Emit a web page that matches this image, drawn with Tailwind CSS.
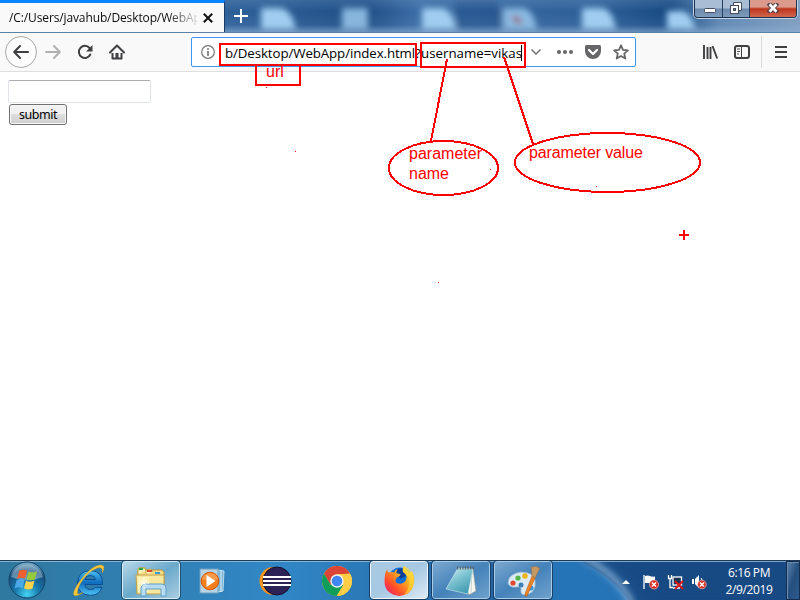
<!DOCTYPE html>
<html lang="en">
<head>
<meta charset="utf-8">
<title>WebApp</title>
<script src="https://cdn.jsdelivr.net/npm/@tailwindcss/browser@4"></script>
</head>
<body class="w-[800px] h-[600px] overflow-hidden bg-white font-['Open_Sans','Noto_Sans',sans-serif]">
<div class="relative flex flex-col w-[800px] h-[600px]">

  <!-- Title bar -->
  <header class="relative flex h-[33px] shrink-0 overflow-hidden bg-[#2f6096] border-b border-[#5c81a8]">
    <svg class="absolute inset-0" width="800" height="33" viewBox="0 0 800 33">
      <defs>
        <linearGradient id="sky" x1="0" x2="1"><stop offset="0" stop-color="#386aa4"/><stop offset=".3" stop-color="#2d5f97"/><stop offset=".46" stop-color="#1f4e86"/><stop offset=".52" stop-color="#3b6ca5"/><stop offset=".75" stop-color="#2d5f97"/><stop offset=".84" stop-color="#164881"/><stop offset=".9" stop-color="#6188b3"/><stop offset="1" stop-color="#829fc0"/></linearGradient>
        <linearGradient id="haze" x1="0" x2="0" y1="0" y2="1"><stop offset="0" stop-color="#8fb3d8" stop-opacity=".2"/><stop offset=".35" stop-color="#8fb3d8" stop-opacity="0"/><stop offset=".75" stop-color="#8fb3d8" stop-opacity=".1"/><stop offset="1" stop-color="#8fb0d3" stop-opacity=".7"/></linearGradient>
        <filter id="soft" x="-50%" y="-50%" width="200%" height="200%"><feGaussianBlur stdDeviation="3"/></filter>
      </defs>
      <rect width="800" height="33" fill="url(#sky)"/>
      <g filter="url(#soft)">
        <path d="M455 0h40l20 33h-60z" fill="#194780" opacity=".45"/>
        <g fill="#a0cff2">
          <path d="M261 8h20q11 2 15 22h-35z"/>
          <path d="M342 8h26v22h-26z" opacity=".8"/>
          <path d="M422 8h20q11 2 14 22h-34z"/>
          <path d="M503 8h20q11 2 14 22h-34z" opacity=".8"/>
          <path d="M582 8h20q11 2 14 22h-34z"/>
          <path d="M667 11h16q8 2 13 19h-29z"/>
        </g>
        <path d="M513 17l8 6" stroke="#a04b68" stroke-width="5"/>
      </g>
      <rect width="800" height="33" fill="url(#haze)"/>
    </svg>
    <div class="relative flex items-center w-[225px] h-[33px] pl-[9px] bg-[#f9f9f9] border-t-[3px] border-t-[#0a84ff] border-r border-r-[#173a66]">
      <span class="w-[188px] overflow-hidden whitespace-nowrap text-[12px] leading-[16px] tracking-[-0.12px] text-[#0c0c0d] [mask-image:linear-gradient(to_right,#000_158px,transparent_192px)]">/C:/Users/javahub/Desktop/WebApp</span>
      <svg class="ml-[6px]" width="10" height="10" viewBox="0 0 10 10"><path d="M.8.8l8.400 8.400M9.200.8L.8 9.200" stroke="#111" stroke-width="2"/></svg>
    </div>
    <svg class="relative ml-[9px] mt-[9px]" width="14" height="14" viewBox="0 0 14 14"><path d="M7 0v14M0 7h14" stroke="#fff" stroke-width="2"/></svg>
    <div class="absolute left-[694px] top-0 flex w-[103px] h-[18px] border border-t-0 border-[#1b3350] rounded-b-[4px] overflow-hidden shadow-[0_0_0_1px_#c2d2e4]">
      <div class="w-[28px] flex justify-center items-start border-r border-[#24415f] bg-linear-to-b from-[#a9bed5] from-45% via-[#6d8bae] via-55% to-[#7f9bbb]">
        <svg class="mt-[8px] ml-[3px]" width="12" height="6" viewBox="0 0 12 6"><rect x=".5" y=".5" width="11" height="4" rx="1" fill="#fff" stroke="#454c60"/></svg>
      </div>
      <div class="w-[27px] flex justify-center items-start border-r border-[#24415f] bg-linear-to-b from-[#a9bed5] from-45% via-[#6d8bae] via-55% to-[#7f9bbb]">
        <svg class="mt-[2px] -ml-px" width="12" height="12" viewBox="0 0 12 12"><path d="M3.500.5h8v8h-8z" fill="#fff" stroke="#454c60"/><rect x=".5" y="3.500" width="8" height="8" fill="#fff" stroke="#454c60"/><rect x="3.500" y="6.500" width="2" height="2" fill="#6b89ab" stroke="#454c60"/></svg>
      </div>
      <div class="flex-1 flex justify-center items-start bg-linear-to-b from-[#dc9a8c] from-40% via-[#bd3419] via-52% to-[#d2654d]">
        <svg class="mt-[3px]" width="12" height="10" viewBox="0 0 12 10"><path d="M3 1.800l6 6.400M9 1.800l-6 6.400" stroke="#513c49" stroke-width="4.600" stroke-linecap="square"/><path d="M2.500 1.300l7 7.400M9.500 1.300l-7 7.400" stroke="#fff" stroke-width="2.700"/></svg>
      </div>
    </div>
  </header>

  <!-- Navigation toolbar -->
  <nav class="flex items-center h-[39px] shrink-0 bg-[#f9f9f9] border-b border-[#dedee0]">
    <div class="flex items-center justify-center ml-[5px] w-[32px] h-[32px] rounded-full border border-[#a9a9aa] bg-[#fcfcfc]">
      <svg width="16" height="16" viewBox="0 0 16 16" fill="none" stroke="#3f3f42" stroke-width="2" stroke-linecap="round" stroke-linejoin="round"><path d="M15 8H1.500M7 2L1.200 8 7 14"/></svg>
    </div>
    <svg class="ml-[8px]" width="16" height="16" viewBox="0 0 16 16" fill="none" stroke="#b0b0b1" stroke-width="2" stroke-linecap="round" stroke-linejoin="round"><path d="M1 8h13.500M9 2l5.800 6L9 14"/></svg>
    <svg class="ml-[16px]" width="16" height="16" viewBox="0 0 16 16"><path d="M13.300 10.500A6 6 0 1 1 12.500 4" fill="none" stroke="#3f3f42" stroke-width="2" stroke-linecap="round"/><path d="M15.500 1v6.500H9z" fill="#3f3f42"/></svg>
    <svg class="ml-[16px]" width="16" height="16" viewBox="0 0 16 16"><path d="M1 8.500L8 1.500l7 7" fill="none" stroke="#3f3f42" stroke-width="2" stroke-linecap="round" stroke-linejoin="round"/><path d="M3.500 9v5.500h9V9" fill="none" stroke="#3f3f42" stroke-width="2" stroke-linejoin="round"/><path d="M6.500 9h3v5h-3z" fill="#3f3f42"/></svg>

    <div class="flex items-center ml-[66px] w-[445px] h-[30px] bg-white border border-[#3d96f2] rounded-[2px]">
      <svg class="ml-[9px]" width="14" height="14" viewBox="0 0 14 14"><circle cx="7" cy="7" r="6.300" fill="none" stroke="#747476" stroke-width="1.200"/><path d="M7 3v1.800M7 6v5" stroke="#747476" stroke-width="1.600"/></svg>
      <div class="flex w-[301px] ml-[10px] pt-[2px] text-[13.300px] leading-[20px] text-black whitespace-nowrap">
        <span class="w-[196px] tracking-[-0.1px]">b/Desktop/WebApp/index.html?</span><span>username=vikas</span>
      </div>
      <svg class="ml-[4px]" width="12" height="8" viewBox="0 0 12 8"><path d="M1.500 1.500L6 6l4.500-4.500" fill="none" stroke="#707072" stroke-width="1.500"/></svg>
      <svg class="ml-[14px]" width="18" height="4" viewBox="0 0 18 4" fill="#666668"><circle cx="3" cy="2" r="2"/><circle cx="9" cy="2" r="2"/><circle cx="15" cy="2" r="2"/></svg>
      <svg class="ml-[11px]" width="16" height="15" viewBox="0 0 16 15"><path d="M1.500 0h13Q16 0 16 1.500V6a8 8 0 0 1-16 0V1.500Q0 0 1.500 0z" fill="#666668"/><path d="M4 5l4 4 4-4" fill="none" stroke="#fff" stroke-width="2.200" stroke-linecap="round" stroke-linejoin="round"/></svg>
      <svg class="ml-[12px]" width="16" height="16" viewBox="0 0 16 16"><path d="M8 1.300l2 4.500 4.900.5-3.700 3.300 1.100 4.900L8 12l-4.300 2.500 1.100-4.900L1.100 6.300 6 5.800z" fill="none" stroke="#666668" stroke-width="1.800" stroke-linejoin="round"/></svg>
    </div>

    <svg class="ml-[66px]" width="17" height="14" viewBox="0 0 17 14" stroke="#3f3f42"><path d="M2 0v14M5.500 2v12M8.500 2v12M10.500 1l4.700 12.500" stroke-width="1.900"/></svg>
    <svg class="ml-[15px]" width="16" height="14" viewBox="0 0 16 14" fill="none" stroke="#3f3f42"><rect x="1" y="1" width="14" height="12" rx="2.200" stroke-width="2"/><path d="M7.500 1v12" stroke-width="1"/><path d="M3 4h3M3 6.500h3M3 9h2" stroke-width=".9"/></svg>
    <div class="ml-[11px] w-px h-[32px] bg-[#dcdcdd]"></div>
    <svg class="ml-[13px]" width="12" height="12" viewBox="0 0 12 12"><path d="M0 1h12M0 6h12M0 11h12" stroke="#3f3f42" stroke-width="2"/></svg>
  </nav>

  <!-- Page -->
  <main class="flex-1 pl-[8px] pt-[8px] bg-white">
    <input type="text" class="block w-[143px] h-[23px] bg-white border border-[#e0e3ea] border-t-[#abadb3] rounded-[2px]">
    <button class="flex items-center justify-center mt-px ml-[1px] w-[58px] h-[21px] pt-[2px] rounded-[3px] border border-[#707070] bg-linear-to-b from-[#f1f1f1] from-45% via-[#dddddd] via-50% to-[#cfcfcf] shadow-[inset_0_0_0_1px_#f8f8f8] text-[12.500px] tracking-[-0.45px] text-black leading-none font-['Noto_Sans',sans-serif]">submit</button>
  </main>

  <!-- Taskbar -->
  <footer class="relative flex h-[40px] shrink-0 overflow-hidden border-t border-[#1d3c57] bg-linear-to-r from-[#2f789f] via-[#3187c6] via-35% to-[#1a4a85] to-83%">
    <svg class="absolute inset-0" width="800" height="39" viewBox="0 0 800 39">
      <defs>
        <filter id="blur5" x="-50%" y="-50%" width="200%" height="200%"><feGaussianBlur stdDeviation="3"/></filter>
      </defs>
      <path d="M552 0h28q35 18 48 39h-76z" fill="#2674b8"/>
      <path d="M582-5q38 20 50 49" fill="none" stroke="#8db6d8" stroke-width="7" opacity=".75" filter="url(#blur5)"/>
      <path d="M600-2h200v41H642q-10-24-42-41z" fill="#174a83" opacity=".6" filter="url(#blur5)"/>
      <path d="M0 .5h800" stroke="#a4c6de" opacity=".75"/>
    </svg>

    <div class="relative flex w-[122px] h-[39px]">
      <svg class="ml-[8px]" width="38" height="38" viewBox="0 0 38 38">
        <defs><radialGradient id="orb" cx=".5" cy=".9" r=".85"><stop offset="0" stop-color="#45d4f5"/><stop offset=".4" stop-color="#1879ad"/><stop offset=".8" stop-color="#174b78"/><stop offset="1" stop-color="#6fa5c5"/></radialGradient></defs>
        <circle cx="19" cy="19" r="18" fill="url(#orb)" stroke="#164364"/>
        <path d="M3 16A16.500 16.500 0 0 1 35 16Q19 23 3 16z" fill="#d8eaf5" opacity=".38"/>
        <path d="M11 10q4-2.500 8-.3l-2 8q-4-2-8 .3z" fill="#ee6030"/><path d="M20.500 10.500q4 2 8.500-.3l-2 8q-4.500 2-8.500-.3z" fill="#97c93d"/><path d="M8.500 19.500q4-2.300 8-.3l-2 8q-4-2-8 .3z" fill="#4ba9e9"/><path d="M18 19.800q4 2 8.500-.3l-2 8q-4.500 2-8.500-.3z" fill="#fdd14a"/>
      </svg>
      <svg class="ml-[26px] mt-[3px]" width="34" height="34" viewBox="0 0 34 34">
        <defs><linearGradient id="ie" x1="0" x2="0" y1="0" y2="1"><stop offset="0" stop-color="#4cc0f5"/><stop offset=".5" stop-color="#0f6cbd"/><stop offset="1" stop-color="#50c5f6"/></linearGradient></defs>
        <path fill-rule="evenodd" d="M30.500 20.500H13q.6 5 5.500 5 3.500 0 5-2.200h6.500Q27.500 31.300 18.500 31.300 6 31 5.500 19 6 7 18.500 6.500 31 7 30.500 20.500zM13 15.500h10.500q-.6-4-5.200-4T13 15.500z" fill="url(#ie)" stroke="#0c4e94" stroke-width="1"/>
        <path d="M6.500 19Q-1 31 3 31.600q3 .3 8-3.100Q1 34.500 8 20 15 8 25 4q6-2 5.500 4.500Q34 1 28.500 1 19 1.500 6.500 19z" fill="#fbc93b" stroke="#e7a41b" stroke-width=".5"/>
      </svg>
    </div>

    <div class="relative w-[58px] h-[38px] rounded-[3px] border border-[#d4ebf7] outline outline-[#1f516f] bg-linear-to-br from-[#b7d8e9] via-[#6aa9cb] to-[#a9cde1] flex justify-center">
      <svg class="mt-[4px]" width="34" height="31" viewBox="0 0 34 31">
        <path d="M4 27V4l1-2h6l1 2h16l2 2v21z" fill="#f3dc84" stroke="#b59640"/>
        <path d="M4 8V4l1-2h6l1 3M12 8V4l5-1 2 3" fill="#fff3b7" stroke="#c2a64b"/>
        <path d="M2 9h28v19H3z" fill="#f8e79f" stroke="#c0a14a"/><path d="M4 11h11v15H4z" fill="#fff5c6" opacity=".7"/>
        <path d="M5 3h4" stroke="#28a745" stroke-width="2"/><path d="M13 5h5" stroke="#d64a32" stroke-width="2"/><path d="M21 7h5" stroke="#359ad5" stroke-width="2"/>
        <path d="M7 30v-8q0-4 4-4h17q4 0 4 4v8h-5v-7H12v7z" fill="#b8ddf0" stroke="#5f9fc7"/>
        <path d="M10 11v12M5 17h10M7 14l6 6M13 14l-6 6" stroke="#fff" stroke-width=".7"/>
      </svg>
    </div>

    <div class="relative flex w-[190px] h-[39px] items-center">
      <svg class="ml-[19px]" width="30" height="26" viewBox="0 0 30 26">
        <path d="M19 2l6 1-1 20-5 1z" fill="#79b4d7" stroke="#d4edf8" stroke-width=".8"/><path d="M22 2v22" stroke="#e5f4fb" stroke-width="1"/>
        <rect x="1" y="1" width="18" height="24" fill="#b7d4e6" stroke="#71a0bd"/>
        <circle cx="11" cy="13" r="8.800" fill="#f57e1c" stroke="#d8570a"/><path d="M3 11a8.500 8.500 0 0 1 16 0q-8 3-16 0z" fill="#ffb16a" opacity=".6"/><path d="M7.500 7v12l9-6z" fill="#fff"/>
      </svg>
      <svg class="ml-[30px]" width="33" height="30" viewBox="0 0 33 30">
        <circle cx="14.500" cy="15" r="14" fill="#f7941e"/><circle cx="18" cy="15" r="14" fill="#2c2255" stroke="#15102e"/><path d="M4 11h28M4 15h28M4 19h28" stroke="#fff" stroke-width="2"/>
      </svg>
      <svg class="ml-[30px]" width="30" height="30" viewBox="0 0 30 30">
        <circle cx="15" cy="15" r="15" fill="#ffcd46"/>
        <path d="M2 7.500A15 15 0 0 1 28 7.500L15 8.500 8.700 19z" fill="#db4437"/>
        <path d="M2 7.500A15 15 0 0 0 14.700 30L21.500 18.800 8.500 18.500z" fill="#0f9d58"/>
        <path d="M15 8.300h13.400A15 15 0 0 1 14.700 30l6.800-11.200z" fill="#ffcd46"/>
        <circle cx="15" cy="15" r="6.700" fill="#f1f1f1"/><circle cx="15" cy="15" r="5.300" fill="#4285f4"/>
      </svg>
    </div>

    <div class="relative flex gap-[4px]">
      <div class="w-[58px] h-[38px] rounded-[3px] border border-[#f0f7fc] outline outline-[#173f68] bg-linear-to-br from-[#aac9e2] via-[#a6c9e3] to-[#dce9f4] flex justify-center">
        <svg class="mt-[3px]" width="32" height="32" viewBox="0 0 32 32">
          <defs><linearGradient id="fox" x1="1" y1="0" x2="0" y2="1"><stop offset="0" stop-color="#fff04a"/><stop offset=".4" stop-color="#ffa81f"/><stop offset=".7" stop-color="#ff4a2c"/><stop offset="1" stop-color="#e8178a"/></linearGradient></defs>
          <circle cx="17" cy="14" r="11.500" fill="#0a6fd6"/><path d="M12 6q5-4 9-2l2 7-6 3z" fill="#083f9a"/>
          <path d="M4 4q0 2 2 3.500 3-1 5 0Q12 4.500 15 4q-2 2-1.500 4.200l4 .8q0 2-3.500 3.500-3 4 0 5.500 3 1.500 6 0 4-2 3.500-7Q22 8 20 7q-1-4 1.500-6Q23 5 27 8l2-2q3 6 2 12-2 12-15 13Q2 29 1.500 17 1.500 9 4 4z" fill="url(#fox)"/>
          <path d="M21.500 1Q31 6 31 17q-1 10-10 13 6-7 5-15-1-5-6-8-1-4 1.500-6z" fill="#ffdc3a" opacity=".6"/>
        </svg>
      </div>
      <div class="w-[58px] h-[38px] rounded-[3px] border border-[#a9cbe5] outline outline-[#173f68] bg-linear-to-br from-[#7ba9d0] via-[#4482ba] to-[#6ea1cc] flex justify-center">
        <svg class="mt-[3px]" width="32" height="31" viewBox="0 0 32 31">
          <defs><linearGradient id="np" x1="0" y1="0" x2=".6" y2="1"><stop offset="0" stop-color="#d6f1f5"/><stop offset=".5" stop-color="#7cc3d1"/><stop offset="1" stop-color="#439cb1"/></linearGradient></defs>
          <path d="M28 4l3 22-7 4-2-5z" fill="#f6f6ef" stroke="#8b9a9d" stroke-width=".7"/><path d="M27 5l-1 24" stroke="#aeb9b9" stroke-width=".6"/>
          <path d="M13 3l15 1-5 25-22-5z" fill="url(#np)" stroke="#d4eef0" stroke-width=".6"/>
          <path d="M12 3h17" stroke="#576165" stroke-width="3" stroke-dasharray="1.300 1.300"/>
        </svg>
      </div>
      <div class="w-[58px] h-[38px] rounded-[3px] border border-[#a9cbe5] outline outline-[#173f68] bg-linear-to-br from-[#7ba9d0] via-[#4482ba] to-[#6ea1cc] flex justify-center">
        <svg class="mt-[3px]" width="33" height="33" viewBox="0 0 33 33">
          <path d="M14 7q12 0 14 8 2 14-11 15-4-1-3-5 0-4-4-3-8 1-9-4Q1 9 14 7z" fill="#dceaf5" stroke="#8fb1cc" stroke-width=".8"/>
          <circle cx="6" cy="18" r="2.600" fill="#e24930"/><circle cx="11" cy="13" r="2.600" fill="#55b647"/><circle cx="18" cy="11" r="2.800" fill="#f2b51e"/><circle cx="14" cy="20" r="2.500" fill="#3f7fb8"/><circle cx="24" cy="23" r="2.600" fill="#3a9be0"/>
          <path d="M25 11l3 2-8 18q-2 1-2-2z" fill="#ed842a" stroke="#b6560d" stroke-width=".6"/><path d="M25 11q0-4-1-9 3 0 5-1 2 2 4 2l-5 10z" fill="#c59964" stroke="#906c42" stroke-width=".5"/>
        </svg>
      </div>
    </div>

    <div class="relative flex-1 flex items-center">
      <svg class="ml-[70px] mt-[3px]" width="8" height="4" viewBox="0 0 8 4"><path d="M4 0l4 4H0z" fill="#fff"/></svg>
      <svg class="ml-[13px] mt-[2px]" width="16" height="16" viewBox="0 0 16 16">
        <path d="M1 1v14" stroke="#fff" stroke-width="1.300"/><path d="M2 2q3-1 5 0 2 1 5 .5V9H2z" fill="#fff"/>
        <circle cx="11" cy="10.500" r="4.500" fill="#d82d21" stroke="#f3bbb2" stroke-width=".7"/><path d="M9 8.500l4 4M13 8.500l-4 4" stroke="#fff" stroke-width="1.500"/>
      </svg>
      <svg class="ml-[8px] mt-[2px]" width="17" height="16" viewBox="0 0 17 16" fill="none">
        <rect x="6" y="3" width="8.500" height="8" fill="#1b3557" stroke="#fff" stroke-width="1.300"/><path d="M1.500 1v3.500h3V1M3 4.500v9h3M6 14h7" stroke="#fff" stroke-width="1.300"/><path d="M8 7l8 8M16 7l-8 8" stroke="#e11515" stroke-width="1.800"/>
      </svg>
      <svg class="ml-[8px] mt-[2px]" width="15" height="16" viewBox="0 0 15 16">
        <path d="M0 5h2v5H0zM3 5l4-4v13L3 10z" fill="#fff"/><path d="M9 4q2 2 1 5" fill="none" stroke="#fff"/>
        <circle cx="10" cy="10.500" r="4.300" fill="#d82d21" stroke="#f3bbb2" stroke-width=".7"/><path d="M8 8.500l4 4M12 8.500l-4 4" stroke="#fff" stroke-width="1.500"/>
      </svg>
      <div class="ml-[12px] w-[60px] text-center whitespace-nowrap text-[12px] leading-[17px] tracking-[-0.4px] text-white">6:16 PM<br>2/9/2019</div>
    </div>
    <div class="relative w-[14px] border border-[#142e52] shadow-[inset_1px_1px_0_#6a8bae] bg-linear-to-br from-[#6185ae] via-[#24507f] to-[#2c5a8c]"></div>
  </footer>

  <!-- Annotations -->
  <svg class="absolute left-0 top-0 pointer-events-none" width="800" height="600" viewBox="0 0 800 600" fill="none" stroke="#f00" stroke-width="2" shape-rendering="crispEdges">
    <path d="M521.500 45v16" stroke="#000" stroke-width="1"/>
    <rect x="220" y="44" width="196" height="21"/>
    <rect x="421" y="43" width="104" height="24"/>
    <path d="M256 66v19h44V66"/>
    <path d="M447 59l-16 82M504 57l29 87"/>
    <ellipse cx="443.500" cy="168" rx="54.500" ry="27"/>
    <ellipse cx="607.500" cy="162.500" rx="92.500" ry="29.500"/>
    <path d="M679 235h10M684 230v10"/>
    <path d="M266 87.500h1M295 151.500h1M438 282.500h1M596 186.500h1M490 169.500h1" stroke-width="1"/>
    <g fill="#f00" stroke="none" font-family="Liberation Sans, Arial, sans-serif" font-size="16">
      <svg x="256" y="66" width="44" height="18"><text x="10" y="11">url</text></svg>
      <text x="409" y="159" textLength="73">parameter</text>
      <text x="409" y="179" textLength="40">name</text>
      <text x="529" y="158" textLength="114">parameter value</text>
    </g>
  </svg>
</div>
</body>
</html>
